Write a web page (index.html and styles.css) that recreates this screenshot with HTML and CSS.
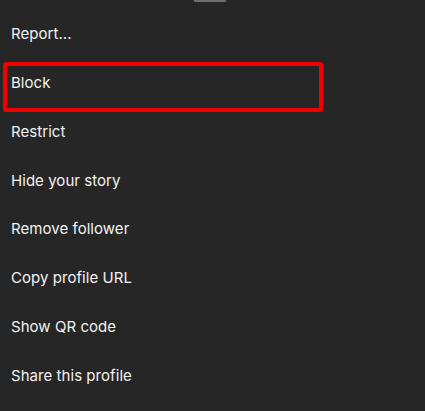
FILE: index.html
```html
<!DOCTYPE html>
<html lang="en">
<head>
    <meta charset="UTF-8" />
    <meta name="viewport" content="width=device-width, initial-scale=1.0" />
    <title>Profile options</title>
    <link rel="stylesheet" href="styles.css">
</head>
<body>
    <div class="sheet">
        <div class="handle"></div>
        <ul class="menu">
            <li>Report...</li>
            <li class="marked">Block</li>
            <li>Restrict</li>
            <li>Hide your story</li>
            <li>Remove follower</li>
            <li>Copy profile URL</li>
            <li>Show QR code</li>
            <li>Share this profile</li>
        </ul>
    </div>
</body>
</html>
```

FILE: styles.css
```css
body { margin: 0; background-color: #262626; color: #f2f2f2; font-family: Inter, "Noto Sans", sans-serif; }
.sheet { position: relative; width: 425px; height: 411px; overflow: hidden; }
.handle { width: 32px; height: 2px; margin-left: 194px; background-color: #6e6e6e; border-radius: 0 0 1px 1px; }
.menu { list-style: none; margin: 0; padding: 7.5px 0 0; }
.menu li { height: 48.76px; display: flex; align-items: center; padding-left: 11px; font-size: 15px; letter-spacing: 0.05px; }
.marked { position: relative; }
.marked::after { content: ""; position: absolute; left: 3px; top: 4px; width: 312px; height: 42px; border: 4px solid #f00000; border-radius: 3px; }
```
